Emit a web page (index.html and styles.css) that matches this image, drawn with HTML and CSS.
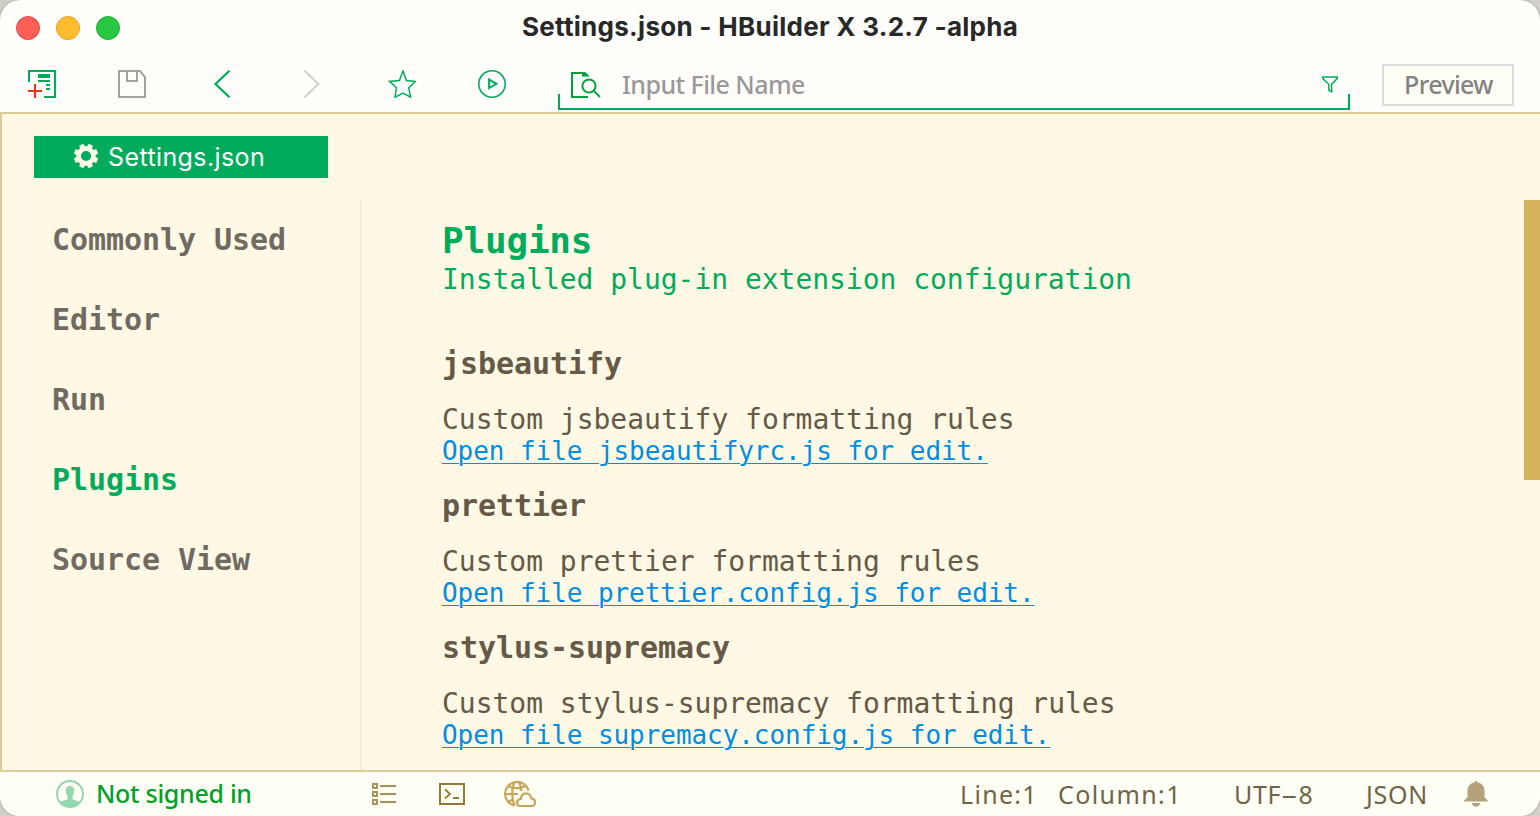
FILE: index.html
```html
<!DOCTYPE html>
<html lang="en">
<head>
<meta charset="utf-8">
<title>Settings.json - HBuilder X 3.2.7 -alpha</title>
<link rel="stylesheet" href="styles.css">
</head>
<body>
<div class="window">
  <header class="titlebar">
    <div class="lights"><span class="light red"></span><span class="light amber"></span><span class="light green"></span></div>
    <h1 class="title"><span class="t-title">Settings.json - HBuilder X 3.2.7 -alpha</span></h1>
  </header>
  <div class="toolbar">
    <div class="tools">
      <svg class="tool" viewBox="0 0 28 28"><path d="M1 12V1H27V27H16" fill="none" stroke="#00ac5c" stroke-width="2"/><path d="M10 4H22V8H10ZM10 10H22V12H10ZM18 14H22V16H18ZM18 18H22V20H18Z" fill="#00ac5c"/><path d="M0 21H14M7 14V28" stroke="#f0330f" stroke-width="2"/></svg>
      <svg class="tool" viewBox="0 0 28 28" fill="none" stroke="#a2a2a2" stroke-width="2"><path d="M1 1H22L27 7V27H1ZM9 1V11H19V1"/></svg>
      <svg class="tool" viewBox="0 0 28 28" fill="none" stroke="#00ac5c" stroke-width="2.2"><path d="M21.5 .7L7.5 14L21.5 27.3"/></svg>
      <svg class="tool" viewBox="0 0 28 28" fill="none" stroke="#d2d2d2" stroke-width="2.2"><path d="M6.5 .7L20.5 14L6.5 27.3"/></svg>
      <svg class="tool" viewBox="0 0 28 28" fill="none" stroke="#00ac5c" stroke-width="1.5"><path d="M15 1L18.4 10.6L27.6 11.4L20.8 17.8L22.6 27.2L15 23L7 27.2L8.4 17.8L1.6 11.4L11.4 10.6Z"/></svg>
      <svg class="tool" viewBox="0 0 28 28" fill="none" stroke="#00ac5c"><circle cx="14" cy="14" r="13.2" stroke-width="1.6"/><path d="M11.1 9.6V18L18.4 13.8Z" stroke-width="2"/></svg>
    </div>
    <div class="search">
      <svg class="search-icon" viewBox="0 0 30 26"><path d="M17 25H1V1H14" fill="none" stroke="#00a03c" stroke-width="2"/><path d="M11 0H14L19 4.5H11Z" fill="#00a03c"/><circle cx="18" cy="14" r="6.6" fill="none" stroke="#00a03c" stroke-width="2"/><path d="M22.8 18.8L29 25" stroke="#00a03c" stroke-width="1.8"/></svg>
      <span class="placeholder">Input File Name</span>
      <svg class="filter" viewBox="0 0 16 17" fill="none" stroke="#00ac5c" stroke-width="1.5"><path d="M.8 1H15.2V2.6L9.6 8.3V15.8L6.8 14V8.3L.8 2.6Z"/></svg>
    </div>
    <div class="preview"><span class="t-preview">Preview</span></div>
  </div>
  <main class="body">
    <div class="tabs">
      <div class="tab">
        <svg class="gear" viewBox="-12 -12 24 24"><circle r="7.4" fill="none" stroke="#fff8e5" stroke-width="4.6"/><g fill="#fff8e5" transform="rotate(22.5)"><path id="tooth" d="M-2.9-8.5L-2.2-12.2H2.2L2.9-8.5Z"/><use href="#tooth" transform="rotate(45)"/><use href="#tooth" transform="rotate(90)"/><use href="#tooth" transform="rotate(135)"/><use href="#tooth" transform="rotate(180)"/><use href="#tooth" transform="rotate(225)"/><use href="#tooth" transform="rotate(270)"/><use href="#tooth" transform="rotate(315)"/></g></svg>
        <span class="t-tab">Settings.json</span>
      </div>
    </div>
    <div class="columns">
      <nav class="sidebar">
        <a class="nav">Commonly Used</a>
        <a class="nav">Editor</a>
        <a class="nav">Run</a>
        <a class="nav active">Plugins</a>
        <a class="nav">Source View</a>
      </nav>
      <section class="content">
        <h2 class="heading">Plugins</h2>
        <p class="subheading">Installed plug-in extension configuration</p>
        <article class="plugin">
          <h3 class="name">jsbeautify</h3>
          <p class="desc">Custom jsbeautify formatting rules</p>
          <a class="link">Open file jsbeautifyrc.js for edit.</a>
        </article>
        <article class="plugin">
          <h3 class="name">prettier</h3>
          <p class="desc">Custom prettier formatting rules</p>
          <a class="link">Open file prettier.config.js for edit.</a>
        </article>
        <article class="plugin">
          <h3 class="name">stylus-supremacy</h3>
          <p class="desc">Custom stylus-supremacy formatting rules</p>
          <a class="link">Open file supremacy.config.js for edit.</a>
        </article>
      </section>
      <div class="scroll"><div class="thumb"></div></div>
    </div>
  </main>
  <footer class="status">
    <svg class="user" viewBox="0 0 28 28"><circle cx="14" cy="14" r="13" fill="none" stroke="#93d7ae" stroke-width="2"/><path fill="#93d7ae" d="M14 6C17 6 18.4 8 18.2 11C18 14 17 15.5 16.4 16.4V19C18 20.5 22 20.5 24 22.5A13.5 13.5 0 0 1 4 22.5C6 20.5 10 20.5 11.6 19V16.4C11 15.5 10 14 9.8 11C9.6 8 11 6 14 6Z"/></svg>
    <span class="signin">Not signed in</span>
    <svg class="list" viewBox="0 0 24 22" fill="none" stroke="#a8905a" stroke-width="2"><path d="M1 1H5V5H1ZM1 9H5V13H1ZM1 17H5V21H1ZM8 3H24M8 11H24M8 19H24"/></svg>
    <svg class="terminal" viewBox="0 0 26 22" fill="none" stroke="#94793a" stroke-width="2"><path d="M1 1H25V21H1Z"/><path d="M6 6.5L11 11L6 15.5M14 15H20" stroke-width="1.8"/></svg>
    <svg class="globe" viewBox="0 0 32 26" fill="none" stroke="#c9a55c" stroke-width="2.2"><path d="M10.5 24.6A12 12 0 1 1 24.6 9.5M1 13H14M4.5 4.8C8 8 17 8 21 4.8M4.5 21C6 19.4 8 18.8 10 18.6M10.5 1.5C7.4 7 7.4 17 10.5 24.5M15 1.5C16.5 4 17.3 7 17.2 10"/><path d="M16.3 25C11.8 25 11.8 18.5 16.8 18C17.5 10.5 26.5 10.5 27.3 17.4C32.4 18 32.2 25 27.6 25Z"/></svg>
    <span class="info line">Line:1</span>
    <span class="info column">Column:1</span>
    <span class="info enc">UTF<span class="dash">–</span>8</span>
    <span class="info lang">JSON</span>
    <svg class="bell" viewBox="0 0 24 26" fill="#b3a177"><path d="M12 0C13 0 13.4.6 13.4 1.4C18 2 20.5 5.5 20.5 10V16C20.5 17.6 24 18.5 24 20.5H0C0 18.5 3.5 17.6 3.5 16V10C3.5 5.5 6 2 10.6 1.4C10.6.6 11 0 12 0ZM8 22H16C16 27 8 27 8 22Z"/></svg>
  </footer>
</div>
</body>
</html>
```
FILE: styles.css
```css
* { box-sizing: border-box; }
body { margin: 0; background: #d2d0c8; font-family: "Noto Sans", sans-serif; }
h1, h2, h3, p { margin: 0; }
svg { display: block; flex: none; }
.window { width: 1540px; height: 816px; display: flex; flex-direction: column; overflow: hidden; border-radius: 20px; background: #fffefb; box-shadow: 0 0 2px #777; }
.titlebar { height: 56px; display: grid; grid-template-columns: 16px 106px 1fr; align-items: center; flex: none; }
.lights { grid-column: 2; display: flex; gap: 16px; }
.light { width: 24px; height: 24px; border-radius: 50%; border: 1px solid; }
.red { background: #ff5f57; border-color: #e4483f; }
.amber { background: #ffbd2e; border-color: #e0a028; }
.green { background: #28c941; border-color: #1fae32; }
.title { padding-left: 400px; font: 700 26px/54px Inter, sans-serif; height: 56px; color: #282828; white-space: nowrap; }
.t-title { letter-spacing: 0.28px; }
.toolbar { height: 56px; flex: none; display: flex; }
.tools { width: 558px; display: flex; gap: 62px; padding: 14px 0 0 28px; }
.tool { width: 28px; height: 28px; }
.search { width: 792px; height: 54px; display: flex; padding-left: 13px; border-bottom: 2px solid #00ac5c; background: linear-gradient(#00ac5c, #00ac5c) left bottom / 2px 14px no-repeat, linear-gradient(#00ac5c, #00ac5c) right bottom / 2px 14px no-repeat; }
.search-icon { width: 30px; height: 26px; margin-top: 16px; }
.placeholder { margin-left: 21px; flex: 1; font-size: 25px; font-weight: 500; letter-spacing: -0.55px; line-height: 57px; color: #999; white-space: nowrap; }
.filter { width: 16px; height: 17px; margin: 20px 12px 0 0; }
.preview { width: 132px; height: 42px; margin: 8px 0 0 32px; border: 2px solid #dcdcdc; background: #fffef5; color: #828282; font-size: 25px; font-weight: 500; letter-spacing: -0.6px; line-height: 37px; padding-left: 20px; }
.body { height: 660px; flex: none; background: #fff8e5; border: solid #dfca98; border-width: 2px 0 2px 2px; display: flex; flex-direction: column; }
.tabs { height: 86px; flex: none; padding: 22px 0 0 32px; }
.tab { width: 294px; height: 42px; background: #00ac5c; color: #fff; display: flex; align-items: center; padding-left: 40px; font: 25px/42px Inter, sans-serif; letter-spacing: 0.4px; gap: 10px; }
.gear { width: 24px; height: 24px; margin-top: -2px; }
.columns { flex: 1; min-height: 0; display: flex; font-family: "DejaVu Sans Mono", monospace; }
.sidebar { width: 360px; border-right: 2px solid #f6ecd2; display: flex; flex-direction: column; padding-left: 50px; }
.nav { font-size: 30px; line-height: 80px; font-weight: 700; color: #706b62; letter-spacing: -0.06px; }
.active { color: #00ac5c; }
.content { flex: 1; padding: 21px 0 0 80px; color: #655a47; white-space: nowrap; }
.heading { font-size: 36px; line-height: 40px; color: #00ac5c; letter-spacing: -0.2px; }
.subheading { font-size: 28px; line-height: 34px; color: #00ac5c; margin: 2px 0 47px; letter-spacing: -0.03px; }
.plugin { height: 142px; }
.name { font-size: 30px; line-height: 40px; margin-bottom: 20px; letter-spacing: -0.06px; }
.desc { font-size: 28px; line-height: 32px; letter-spacing: -0.02px; }
.link { display: block; margin-top: -1px; font-size: 26px; line-height: 32px; color: #008ee0; letter-spacing: -0.06px; text-decoration: underline 1px; text-underline-offset: 3px; }
.scroll { width: 16px; }
.thumb { height: 280px; background: #d7b25d; }
.status { flex: 1; display: flex; background: #fffff5; padding-left: 56px; white-space: nowrap; font-size: 25px; line-height: 44px; }
.user { width: 28px; height: 28px; margin-top: 8px; }
.signin { margin-left: 12px; width: 276px; color: #00a128; line-height: 42px; font-weight: 500; letter-spacing: -0.3px; }
.list { width: 24px; height: 22px; margin: 11px 43px 0 0; }
.terminal { width: 26px; height: 22px; margin: 11px 39px 0 0; }
.globe { width: 32px; height: 26px; margin-top: 9px; }
.info { color: #6f6447; }
.line { margin-left: 424px; width: 98px; letter-spacing: 1.3px; }
.column { width: 176px; letter-spacing: 1.4px; }
.enc { width: 132px; letter-spacing: 0.7px; }
.dash { display: inline-block; transform: scaleX(1.2); margin: 0 2px; }
.lang { width: 98px; letter-spacing: 0.7px; }
.bell { width: 24px; height: 26px; margin-top: 9px; }
```
